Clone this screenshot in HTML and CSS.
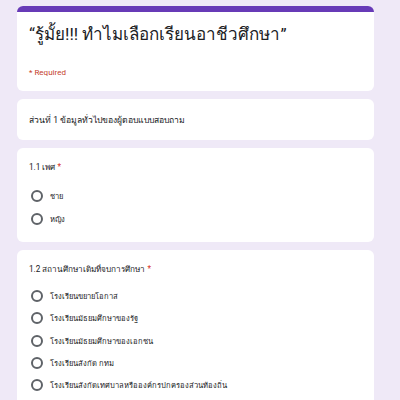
FILE: index.html
```html
<!DOCTYPE html>
<html lang="th">
<head>
<meta charset="utf-8">
<link rel="stylesheet" href="styles.css">
</head>
<body>
<div class="form">
  <div class="card header">
    <div class="bar"></div>
    <div class="header-body">
      <h1 class="title">“รู้มั้ย!!! ทำไมเลือกเรียนอาชีวศึกษา”</h1>
      <div class="required">* Required</div>
    </div>
  </div>
  <div class="card section">
    <div class="section-title">ส่วนที่ 1 ข้อมูลทั่วไปของผู้ตอบแบบสอบถาม</div>
  </div>
  <div class="card question q1">
    <div class="q-title">1.1 เพศ <span class="star">*</span></div>
    <div class="options">
      <div class="option"><span class="radio"></span><span class="label">ชาย</span></div>
      <div class="option"><span class="radio"></span><span class="label">หญิง</span></div>
    </div>
  </div>
  <div class="card question">
    <div class="q-title">1.2 สถานศึกษาเดิมที่จบการศึกษา <span class="star">*</span></div>
    <div class="options">
      <div class="option"><span class="radio"></span><span class="label">โรงเรียนขยายโอกาส</span></div>
      <div class="option"><span class="radio"></span><span class="label">โรงเรียนมัธยมศึกษาของรัฐ</span></div>
      <div class="option"><span class="radio"></span><span class="label">โรงเรียนมัธยมศึกษาของเอกชน</span></div>
      <div class="option"><span class="radio"></span><span class="label">โรงเรียนสังกัด กทม</span></div>
      <div class="option"><span class="radio"></span><span class="label">โรงเรียนสังกัดเทศบาลหรือองค์กรปกครองส่วนท้องถิ่น</span></div>
    </div>
  </div>
</div>
</body>
</html>
```
FILE: styles.css
```css
html, body {
  margin: 0;
  padding: 0;
  background: #efe9f7;
}
body {
  font-family: Roboto, "Noto Sans", "DejaVu Sans", sans-serif;
  color: #202124;
}
.form {
  display: flex;
  flex-direction: column;
  gap: 8px;
  width: 357px;
  margin-left: 17px;
  padding-top: 6px;
}
.card {
  background: #fff;
  border-radius: 6px;
  overflow: hidden;
}
.header {
  height: 85px;
  display: flex;
  flex-direction: column;
}
.bar {
  height: 6px;
  background: #673ab7;
}
.header-body {
  padding: 5px 12px 0 12px;
}
.title {
  margin: 0;
  font-size: 17px;
  font-weight: 400;
  line-height: 34px;
}
.required {
  margin-top: 17px;
  font-size: 8px;
  color: #c5402a;
}
.section {
  height: 41px;
  display: flex;
  align-items: center;
  padding: 0 12px;
  box-sizing: border-box;
}
.section-title {
  font-size: 8.6px;
}
.question {
  padding: 12px 12px 10px 12px;
}
.q1 {
  height: 94px;
  box-sizing: border-box;
}
.q1 .options {
  margin-top: 10px;
}
.q1 .option {
  height: 23px;
}
.q-title {
  font-size: 8.2px;
  line-height: 14px;
}
.star {
  color: #d93025;
}
.options {
  display: flex;
  flex-direction: column;
  margin-top: 9px;
}
.option {
  display: flex;
  align-items: center;
  height: 22.3px;
  padding-left: 2px;
}
.radio {
  width: 8px;
  height: 8px;
  border: 2px solid #5f6368;
  border-radius: 50%;
  flex: none;
}
.label {
  margin-left: 7px;
  font-size: 7.6px;
}
```
